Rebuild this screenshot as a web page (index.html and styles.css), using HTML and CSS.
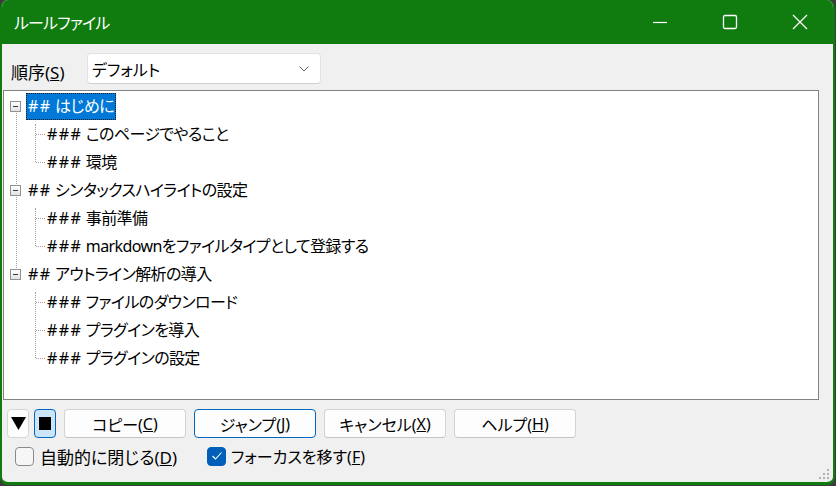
FILE: index.html
```html
<!DOCTYPE html>
<html lang="ja">
<head>
<meta charset="utf-8">
<title>ルールファイル</title>
<link rel="stylesheet" href="styles.css">
</head>
<body>
<div class="window">
  <div class="titlebar">
    <div class="title-wrap"><span class="title">ルールファイル</span></div>
    <div class="caption">
      <div class="cbtn"><svg width="16" height="16" viewBox="0 0 16 16"><line x1="1" y1="8.5" x2="15" y2="8.5" stroke="#fff" stroke-width="1.2"/></svg></div>
      <div class="cbtn"><svg width="16" height="16" viewBox="0 0 16 16"><rect x="1.5" y="1.5" width="13" height="13" rx="1.5" fill="none" stroke="#fff" stroke-width="1.3"/></svg></div>
      <div class="cbtn"><svg width="16" height="16" viewBox="0 0 16 16"><path d="M1 1L15 15M15 1L1 15" stroke="#fff" stroke-width="1.3" fill="none"/></svg></div>
    </div>
  </div>
  <div class="content">
    <div class="order-row">
      <div class="order-label">順序(<u>S</u>)</div>
      <div class="combo">
        <span class="combo-text">デフォルト</span>
        <svg class="chev" width="10" height="6" viewBox="0 0 10 6"><path d="M0.5 0.5L5 5L9.5 0.5" fill="none" stroke="#606060" stroke-width="1"/></svg>
      </div>
    </div>
    <div class="tree">
      <div class="group">
        <div class="row l1"><span class="exp"></span><span class="label selected"><span class="hash">##</span> はじめに</span></div>
        <div class="children">
          <div class="row l2"><span class="label"><span class="hash">###</span> このページでやること</span></div>
          <div class="row l2"><span class="label"><span class="hash">###</span> 環境</span></div>
        </div>
      </div>
      <div class="group">
        <div class="row l1"><span class="exp"></span><span class="label"><span class="hash">##</span> シンタックスハイライトの設定</span></div>
        <div class="children">
          <div class="row l2"><span class="label"><span class="hash">###</span> 事前準備</span></div>
          <div class="row l2"><span class="label"><span class="hash">###</span> markdownをファイルタイプとして登録する</span></div>
        </div>
      </div>
      <div class="group">
        <div class="row l1"><span class="exp"></span><span class="label"><span class="hash">##</span> アウトライン解析の導入</span></div>
        <div class="children">
          <div class="row l2"><span class="label"><span class="hash">###</span> ファイルのダウンロード</span></div>
          <div class="row l2"><span class="label"><span class="hash">###</span> プラグインを導入</span></div>
          <div class="row l2"><span class="label"><span class="hash">###</span> プラグインの設定</span></div>
        </div>
      </div>
    </div>
    <div class="btn-row">
      <div class="tool-pair">
        <div class="tbtn"><svg width="15" height="13" viewBox="0 0 15 13"><polygon points="0,0 15,0 7.5,13" fill="#000"/></svg></div>
        <div class="tbtn pressed"><span class="sq"></span></div>
      </div>
      <div class="btn">コピー(<u>C</u>)</div>
      <div class="btn default">ジャンプ(<u>J</u>)</div>
      <div class="btn">キャンセル(<u>X</u>)</div>
      <div class="btn">ヘルプ(<u>H</u>)</div>
    </div>
    <div class="check-row">
      <div class="check-item first"><span class="box"></span><span class="clabel">自動的に閉じる(<u>D</u>)</span></div>
      <div class="check-item"><span class="box checked"><svg width="12" height="10" viewBox="0 0 12 10"><path d="M1.5 5L4.5 8L10.5 1.5" fill="none" stroke="#fff" stroke-width="1.1"/></svg></span><span class="clabel">フォーカスを移す(<u>F</u>)</span></div>
    </div>
  </div>
  <svg class="grip" width="12" height="12" viewBox="0 0 12 12">
    <rect x="9" y="1" width="2" height="2" fill="#b0b0b0"/>
    <rect x="5" y="5" width="2" height="2" fill="#b0b0b0"/>
    <rect x="9" y="5" width="2" height="2" fill="#b0b0b0"/>
    <rect x="1" y="9" width="2" height="2" fill="#b0b0b0"/>
    <rect x="5" y="9" width="2" height="2" fill="#b0b0b0"/>
    <rect x="9" y="9" width="2" height="2" fill="#b0b0b0"/>
  </svg>
</div>
</body>
</html>
```

FILE: styles.css
```css
html, body {
  margin: 0;
  padding: 0;
  background: #3c3c3c;
}
body {
  font-family: "Noto Sans", "Noto Sans CJK JP", sans-serif;
  font-feature-settings: "palt";
  color: #000;
}
.window {
  position: relative;
  width: 835px;
  height: 485px;
  box-sizing: border-box;
  border: 2px solid #107c10;
  border-top: 0;
  border-bottom-width: 3px;
  border-radius: 8px;
  background: #f0f0f0;
  overflow: hidden;
  display: flex;
  flex-direction: column;
}
.titlebar {
  height: 44px;
  background: #107c10;
  display: flex;
  align-items: center;
  margin: 0 -2px;
  padding-left: 14px;
}
.title-wrap {
  flex: 1;
  height: 44px;
  display: flex;
  align-items: center;
}
.title {
  color: #fff;
  font-size: 16px;
  letter-spacing: -0.8px;
  white-space: nowrap;
}
.caption {
  display: flex;
  height: 44px;
}
.cbtn {
  width: 70px;
  height: 44px;
  display: flex;
  align-items: center;
  justify-content: center;
}
.content {
  flex: 1;
  display: flex;
  flex-direction: column;
}
.order-row {
  display: flex;
  margin-top: 9px;
  height: 31px;
}
.order-label {
  width: 76px;
  padding-left: 9px;
  font-size: 17px;
  line-height: 20px;
  padding-top: 10px;
}
.combo {
  width: 234px;
  height: 31px;
  box-sizing: border-box;
  border: 1px solid #e1e1e1;
  border-bottom-color: #cfcfcf;
  border-radius: 4px;
  background: #fff;
  display: flex;
  align-items: center;
  padding: 0 11px 0 4px;
}
.combo-text {
  flex: 1;
  font-size: 16px;
}
.chev {
  margin-top: 1px;
}
.tree {
  margin: 6px 0 0 1px;
  width: 816px;
  height: 310px;
  box-sizing: border-box;
  border: 1px solid #828282;
  background: #fff;
  padding-top: 1px;
}
.group {
  position: relative;
}
.group:not(:last-child)::before {
  content: "";
  position: absolute;
  left: 12px;
  top: 14px;
  bottom: -14px;
  border-left: 1px dotted #a0a0a0;
  z-index: 1;
}
.row {
  height: 28px;
  display: flex;
  align-items: center;
  position: relative;
}
.l1 {
  padding-left: 6px;
}
.l2 {
  padding-left: 41px;
}
.l2::before {
  content: "";
  position: absolute;
  left: 32px;
  width: 9px;
  top: 14px;
  border-top: 1px dotted #a0a0a0;
}
.children {
  position: relative;
}
.children::before {
  content: "";
  position: absolute;
  left: 31px;
  top: 4px;
  bottom: 14px;
  border-left: 1px dotted #a0a0a0;
}
.exp {
  position: relative;
  z-index: 2;
  width: 11px;
  height: 11px;
  box-sizing: border-box;
  border: 1px solid #919191;
  background: linear-gradient(#ffffff, #e2e2e2);
  margin-right: 5px;
}
.exp::after {
  content: "";
  position: absolute;
  left: 2px;
  top: 4px;
  width: 5px;
  height: 1px;
  background: #3c3c3c;
}
.label {
  height: 27px;
  line-height: 27px;
  padding: 0 2px;
  font-size: 16px;
  letter-spacing: -0.6px;
  white-space: nowrap;
}
.hash {
  letter-spacing: 1.4px;
}
.selected {
  background: #0078d7;
  color: #fff;
  outline: 1px dotted #1a1a1a;
  outline-offset: -1px;
}
.btn-row {
  display: flex;
  gap: 8px;
  margin: 9px 0 0 5px;
  height: 29px;
}
.tool-pair {
  display: flex;
  gap: 5px;
}
.tbtn {
  width: 22px;
  height: 29px;
  box-sizing: border-box;
  border: 1px solid #d6d6d6;
  border-radius: 4px;
  background: #fdfdfd;
  display: flex;
  align-items: center;
  justify-content: center;
}
.tbtn.pressed {
  background: #cce4f7;
  border-color: #0067c0;
}
.sq {
  width: 12px;
  height: 13px;
  background: #000;
}
.btn {
  width: 122px;
  height: 29px;
  box-sizing: border-box;
  border: 1px solid #d3d3d3;
  border-bottom-color: #c4c4c4;
  border-radius: 4px;
  background: #fdfdfd;
  display: flex;
  align-items: center;
  justify-content: center;
  font-size: 16px;
}
.btn.default {
  border-color: #0067c0;
}
.check-row {
  display: flex;
  align-items: center;
  margin: 8px 0 0 13px;
  height: 20px;
}
.check-item {
  display: flex;
  align-items: center;
  gap: 8px;
}
.check-item.first {
  width: 192px;
}
.box {
  width: 19px;
  height: 19px;
  box-sizing: border-box;
  border: 1px solid #8a8a8a;
  border-radius: 4px;
  background: #f6f6f6;
  display: flex;
  align-items: center;
  justify-content: center;
}
.box.checked {
  background: #005fb8;
  border-color: #005fb8;
}
.clabel {
  font-size: 16px;
  margin-left: -3px;
}
.first .clabel {
  font-size: 17px;
  margin-left: -2px;
}
.grip {
  position: absolute;
  right: 3px;
  bottom: 2px;
}
```
